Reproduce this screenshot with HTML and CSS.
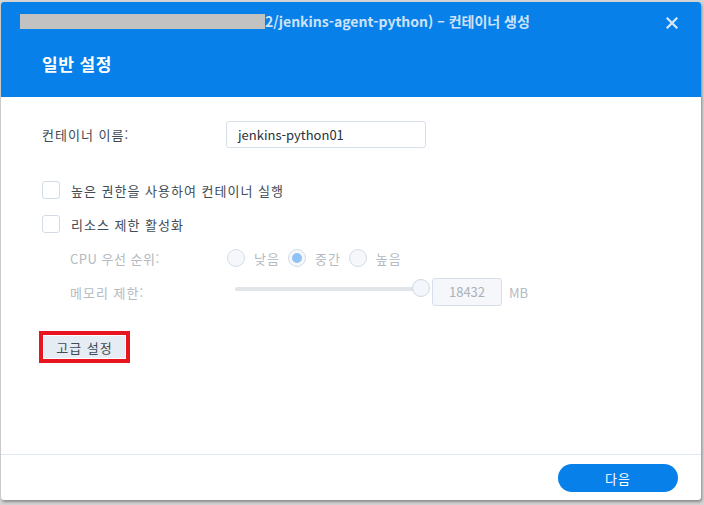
FILE: index.html
```html
<!DOCTYPE html>
<html lang="ko">
<head>
    <meta charset="UTF-8">
    <title>컨테이너 생성</title>
    <link rel="stylesheet" href="styles.css">
</head>
<body>
    <div class="dialog">
        <div class="header">
            <div class="title-bar">
                <span class="redact"></span>
                <span class="title">2/jenkins-agent-python) – 컨테이너 생성</span>
                <span class="close">
                    <svg width="12" height="12" viewBox="0 0 12 12"><path d="M1.5 1.5 L10.5 10.5 M10.5 1.5 L1.5 10.5" stroke="#d8e8fb" stroke-width="2.2" stroke-linecap="square"/></svg>
                </span>
            </div>
            <h2 class="step">일반 설정</h2>
        </div>
        <div class="body">
            <div class="row name-row">
                <label class="label">컨테이너 이름:</label>
                <div class="text-input">jenkins-python01</div>
            </div>
            <div class="check-row first">
                <span class="checkbox"></span>
                <span class="ko">높은 권한을 사용하여 컨테이너 실행</span>
            </div>
            <div class="check-row">
                <span class="checkbox"></span>
                <span class="ko">리소스 제한 활성화</span>
            </div>
            <div class="sub-row cpu">
                <span class="sub-label">CPU 우선 순위:</span>
                <div class="radios">
                    <span class="radio"></span><span class="radio-text">낮음</span>
                    <span class="radio checked"></span><span class="radio-text">중간</span>
                    <span class="radio"></span><span class="radio-text">높음</span>
                </div>
            </div>
            <div class="sub-row mem">
                <span class="sub-label ko">메모리 제한:</span>
                <div class="slider"><span class="thumb"></span></div>
                <div class="num-input">18432</div>
                <span class="unit">MB</span>
            </div>
            <div class="adv-wrap">
                <button class="adv">고급 설정</button>
            </div>
        </div>
        <div class="footer">
            <button class="next">다음</button>
        </div>
    </div>
</body>
</html>
```

FILE: styles.css
```css
html, body {
    margin: 0;
    padding: 0;
}
body {
    width: 704px;
    height: 505px;
    background: #d4d4d4;
    font-family: "Noto Sans CJK KR", "Noto Sans", sans-serif;
    font-size: 13px;
    color: #414b55;
    overflow: hidden;
}
.ko {
    letter-spacing: 1px;
}
.dialog {
    margin: 2px 0 0 1px;
    width: 700px;
    height: 498px;
    background: #fff;
    border-radius: 3px;
    box-shadow: 1px 2px 3px rgba(0, 0, 0, 0.35);
    display: flex;
    flex-direction: column;
    overflow: hidden;
}
.header {
    background: #0780ea;
    height: 95px;
    box-sizing: border-box;
}
.title-bar {
    height: 38px;
    display: flex;
    align-items: center;
    padding-left: 19px;
    position: relative;
}
.redact {
    width: 245px;
    height: 15px;
    background: #c2c2c2;
}
.title {
    color: #cde2f9;
    font-weight: bold;
    font-size: 14px;
}
.close {
    position: absolute;
    right: 23px;
    top: 15px;
    line-height: 0;
}
.step {
    margin: 0;
    padding: 11px 0 0 41px;
    color: #fff;
    font-size: 17px;
    font-weight: bold;
    letter-spacing: 0.5px;
}
.body {
    flex: 1;
    padding: 24px 0 0 41px;
}
.row {
    display: flex;
    align-items: center;
}
.label {
    width: 184px;
    letter-spacing: 1px;
}
.text-input {
    width: 200px;
    height: 27px;
    box-sizing: border-box;
    border: 1px solid #d7e0ea;
    border-radius: 3px;
    padding-left: 11px;
    line-height: 25px;
    color: #27313b;
}
.check-row {
    display: flex;
    align-items: center;
    height: 18px;
    margin-top: 16px;
}
.check-row.first {
    margin-top: 33px;
}
.checkbox {
    width: 16px;
    height: 16px;
    border: 1px solid #d3dce6;
    border-radius: 3px;
    margin-right: 11px;
}
.sub-row {
    display: flex;
    align-items: center;
    padding-left: 28px;
    color: #b3bac2;
}
.cpu {
    margin-top: 16px;
    height: 18px;
}
.mem {
    margin-top: 11px;
    height: 28px;
}
.sub-label {
    width: 157px;
    letter-spacing: 0.5px;
}
.sub-label.ko {
    letter-spacing: 1px;
}
.radios {
    display: flex;
    align-items: center;
}
.radio {
    width: 16px;
    height: 16px;
    border: 1px solid #d3dce6;
    border-radius: 50%;
    background: #f5f7fa;
    margin-right: 9px;
    position: relative;
}
.radio.checked::after {
    content: "";
    position: absolute;
    left: 3px;
    top: 3px;
    width: 10px;
    height: 10px;
    border-radius: 50%;
    background: #8ec3f4;
}
.radio-text {
    margin-right: 8px;
    letter-spacing: 1px;
}
.slider {
    margin-left: 8px;
    width: 184px;
    height: 4px;
    border-radius: 2px;
    background: #e1e5e9;
    position: relative;
    margin-top: -6px;
}
.thumb {
    position: absolute;
    right: -11px;
    top: -8px;
    width: 16px;
    height: 16px;
    border: 1px solid #cfd8e2;
    border-radius: 50%;
    background: #f3f7fb;
}
.num-input {
    margin-left: 13px;
    width: 70px;
    height: 28px;
    box-sizing: border-box;
    border: 1px solid #d7e0ea;
    border-radius: 3px;
    background: #f5f7fa;
    line-height: 26px;
    text-align: center;
    color: #aab2bb;
}
.unit {
    margin-left: 7px;
}
.adv-wrap {
    margin: 25px 0 0 -3px;
    width: 81px;
    border: 4px solid #e8141f;
    padding: 1px;
}
.adv {
    display: block;
    width: 81px;
    height: 22px;
    border: none;
    background: #e6ecf3;
    font-family: inherit;
    font-size: 13px;
    letter-spacing: 1px;
    color: #414b55;
    padding: 0;
}
.footer {
    height: 45px;
    border-top: 1px solid #e1e7ee;
    display: flex;
    justify-content: flex-end;
    align-items: center;
    padding-right: 23px;
}
.next {
    width: 120px;
    height: 28px;
    border: none;
    border-radius: 14px;
    background: #0780ea;
    color: #fff;
    font-family: inherit;
    font-size: 13px;
    letter-spacing: 1px;
    margin-top: 1px;
}
```
